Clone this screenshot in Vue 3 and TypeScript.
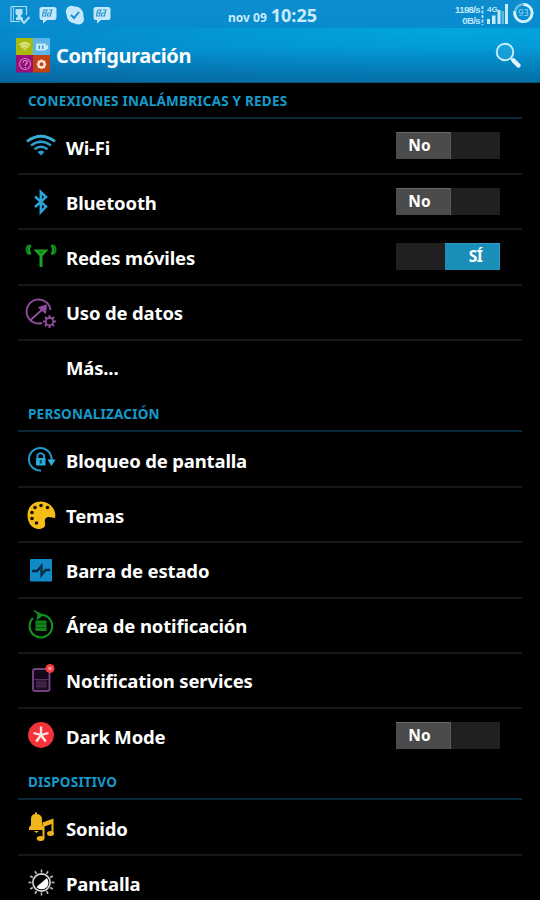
<script setup lang="ts">
interface Item { icon: string; label: string; on?: boolean }
interface Group { title: string; items: Item[] }

const groups: Group[] = [
  {
    title: 'CONEXIONES INALÁMBRICAS Y REDES',
    items: [
      { icon: 'wifi', label: 'Wi-Fi', on: false },
      { icon: 'bluetooth', label: 'Bluetooth', on: false },
      { icon: 'antenna', label: 'Redes móviles', on: true },
      { icon: 'data', label: 'Uso de datos' },
      { icon: '', label: 'Más...' },
    ],
  },
  {
    title: 'PERSONALIZACIÓN',
    items: [
      { icon: 'lock', label: 'Bloqueo de pantalla' },
      { icon: 'palette', label: 'Temas' },
      { icon: 'pulse', label: 'Barra de estado' },
      { icon: 'area', label: 'Área de notificación' },
      { icon: 'phone', label: 'Notification services' },
      { icon: 'star', label: 'Dark Mode', on: false },
    ],
  },
  {
    title: 'DISPOSITIVO',
    items: [
      { icon: 'sound', label: 'Sonido' },
      { icon: 'display', label: 'Pantalla' },
    ],
  },
]
const rays = [0, 30, 60, 90, 120, 150, 180, 210, 240, 270, 300, 330]
const teeth = [0, 45, 90, 135, 180, 225, 270, 315]
</script>

<template>
  <div class="screen">
    <div class="top">
      <div class="status">
        <svg class="notifs" width="115" height="28" viewBox="0 0 115 28">
          <g fill="none" stroke="#a9dcf6" stroke-width="1.2">
            <path d="M11 6.500H26.500V15M11 6.500V21.500H20" />
            <path d="M13.500 7V21" stroke-width=".8" />
            <path d="M21 19.500l3 3.500 5.500-6" stroke-width="2" />
          </g>
          <path d="M15.500 9h7v5l-2 2 2.500 2v2h-7v-2l2-2-2.500-2z" fill="#b5e2f8" />
          <g fill="#c3e8fb">
            <path d="M42 7h12q2.500 0 2.500 2.500v8q0 2.500-2.500 2.500h-7l-4 3.500V20h-1q-2.500 0-2.500-2.500v-8Q39.500 7 42 7z" />
            <path d="M96 7h12q2.500 0 2.500 2.500v8q0 2.500-2.500 2.500h-7l-4 3.500V20h-1q-2.500 0-2.500-2.500v-8Q93.500 7 96 7z" />
            <circle cx="75" cy="15" r="8.400" /><circle cx="71.500" cy="11.500" r="5.700" /><circle cx="78.500" cy="19" r="5.500" />
          </g>
          <path d="M71 15l3 3 5-6" fill="none" stroke="#168bc8" stroke-width="1.900" />
          <g fill="none" stroke="#2694cb" stroke-width="1.100">
            <path d="M44 10h3l-1 3h-3zM49 10h3l-1 3M43 13l-.6 3h3l.7-3M48 13h3l-.6 3h-3z" />
            <path d="M98 10h3l-1 3h-3zM103 10h3l-1 3M97 13l-.6 3h3l.7-3M102 13h3l-.6 3h-3z" />
          </g>
        </svg>
        <div class="clock"><span class="date">nov 09</span><span class="time">10:25</span></div>
        <div class="meters">
          <div class="speed"><span>1198/s</span><span>0B/s</span></div>
          <svg width="60" height="28" viewBox="0 0 60 28">
            <path d="M2.500 6v19" stroke="#b2e1f6" stroke-width="1.800" stroke-dasharray="3 1.500" />
            <path d="M7 19h3v5H7zM12 15.500h3.500v8.500H12zM17.500 10h3v14h-3zM25 4h3v20h-3z" fill="#c3ebfa" />
            <path d="M21.500 11h2.500v13h-2.500z" fill="#5fb8df" />
            <text x="7" y="12" class="net">4G</text>
            <circle cx="43.500" cy="13" r="8.700" fill="none" stroke="#67bce3" stroke-width="2.600" />
            <path d="M43.500 4.300a8.700 8.700 0 1 1-8.700 7" fill="none" stroke="#d4f1fe" stroke-width="2.800" />
            <text x="43.500" y="16.300" class="batt">93</text>
          </svg>
        </div>
      </div>
      <header class="bar">
        <svg class="logo" width="35" height="35" viewBox="0 0 35 35">
          <path d="M0 0h17v17H0z" fill="#a7ba0d" /><path d="M17 0h17v17H17z" fill="#5bb5e8" />
          <path d="M0 17h17v17.500H0z" fill="#980e7b" /><path d="M17 17h17v17.500H17z" fill="#c24111" />
          <path d="M3.500 6.500q5.300-4 10.600 0L8.800 13z" fill="#c8d55c" />
          <path d="M3.500 7q5.300-5 10.600 0M5.200 9.500q3.600-3.200 7.200 0" fill="none" stroke="#dce68e" stroke-width="1.300" />
          <path d="M20 5.500h10v7H20zM30 7.500h2v3.500h-2z" fill="#c7eafb" /><path d="M22.500 7.500h1.500v3.500h-1.500zM26 7.500h1.500v3.500H26z" fill="#3e98cc" />
          <circle cx="9" cy="26" r="5.500" fill="none" stroke="#cb80b8" stroke-width="1.200" />
          <path d="M7 24.500q.2-2 2.200-2 2 0 2 1.700 0 1.200-1.800 2.200v1.400M9.400 29v1" fill="none" stroke="#dc99cb" stroke-width="1.200" />
          <g stroke="#ffe3d4" stroke-width="2"><path v-for="a in teeth" :key="a" d="M25.500 21.500v2" :transform="`rotate(${a} 25.500 26.300)`" /></g>
          <circle cx="25.500" cy="26.300" r="3" fill="none" stroke="#ffe9dd" stroke-width="2" />
        </svg>
        <h1>Configuración</h1>
        <svg class="search" width="30" height="30" viewBox="0 0 30 30">
          <circle cx="11" cy="11" r="8.300" fill="#38b1e0" fill-opacity=".4" stroke="#c9edfb" stroke-width="1.900" />
          <path d="M16.800 17l2.500 2.500" stroke="#c9edfb" stroke-width="2" />
          <path d="M19.500 19.500l5 5" stroke="#e0f6ff" stroke-width="4.500" stroke-linecap="round" />
        </svg>
      </header>
    </div>
    <main>
      <section v-for="g in groups" :key="g.title">
        <h2><span>{{ g.title }}</span></h2>
        <div v-for="it in g.items" :key="it.label" class="row">
          <svg class="icon" width="34" height="34" viewBox="0 0 34 34">
            <g v-if="it.icon === 'wifi'" fill="none" stroke="#2b9fd0" stroke-width="2.300">
              <path d="M3 12.500q14-10.500 28 0" stroke="#3bacd6" stroke-width="2.700" /><path d="M7 16.500q10-7.500 20 0" /><path d="M10.500 20.200q6.500-4.800 13 0" />
              <path d="M13.500 23q3.500-2.400 7 0L17 26.500z" fill="#2b9fd0" stroke="none" />
            </g>
            <path v-else-if="it.icon === 'bluetooth'" d="M11 11.500l11 10-5.200 5.500V7l5.200 5-11 10" fill="none" stroke="#2ba4d6" stroke-width="2.500" />
            <g v-else-if="it.icon === 'antenna'" fill="none" stroke="#14a51b" stroke-width="2.200">
              <path d="M9.500 9.500h15l-6 6.500v11h-3V16z" fill="#18a51f" stroke="none" />
              <path d="M14.500 11.500h5l-2.500 1.800z" fill="#075b0b" stroke="none" />
              <path d="M4.500 5q-4 4.500 0 9.500M29.500 5q4 4.500 0 9.500" stroke="#118718" stroke-width="2" />
              <path d="M6.500 5q-3.200 4.700 0 9.500M27.500 5q3.200 4.700 0 9.500" />
            </g>
            <g v-else-if="it.icon === 'data'" fill="none" stroke="#8e4d9d" stroke-width="1.900">
              <path d="M18 28A12 12 0 1 1 26.500 15M6 25.500L20 13" />
              <path d="M14.500 12.500l8-2.500-1 8.500z" fill="#8e4d9d" stroke-width="1" />
              <circle cx="25.500" cy="26.500" r="3.800" />
              <path v-for="a in teeth" :key="a" d="M25.500 20v3" :transform="`rotate(${a} 25.500 26.500)`" />
            </g>
            <g v-else-if="it.icon === 'lock'" fill="none" stroke="#2495c6" stroke-width="2">
              <path d="M17 28.500A11.300 11.300 0 1 1 27.500 18" />
              <path d="M23.500 17.500h8L27.500 24z" fill="#31b0dc" stroke="none" />
              <path d="M12 16h9.500v7.500H12z" fill="#2da8d8" stroke="none" /><path d="M13.500 16.500v-3.500q3-3.500 6.500 0v3.500" /><path d="M16.800 18v3.500" stroke="#07445f" />
            </g>
            <g v-else-if="it.icon === 'palette'">
              <path d="M17 3.500C9 3.500 3.500 9 3.500 17.500c0 8 5.500 14 12 13.500 6-.5 6-4 5.500-6.500-.8-3.500 1-5.300 4-5.500l6 1c2-8-5-16.500-14-16.500z" fill="#f3bc17" />
              <g fill="#140f00"><circle cx="11" cy="9.500" r="1.800" /><circle cx="17" cy="7.500" r="1.800" /><circle cx="23.500" cy="9.500" r="1.800" /><circle cx="8" cy="14.500" r="1.800" /><circle cx="8" cy="20.500" r="1.800" /><circle cx="12.500" cy="25" r="1.800" /></g>
            </g>
            <g v-else-if="it.icon === 'pulse'">
              <rect x="6" y="6" width="22" height="22.500" rx="1" fill="#118bc7" />
              <path d="M8 18h5l4.500-5v9l4-5H26" fill="none" stroke="#042b43" stroke-width="2.300" />
            </g>
            <g v-else-if="it.icon === 'area'" fill="none" stroke="#14921d" stroke-width="2.100">
              <path d="M19 7A11.300 11.300 0 1 1 9 10" /><path d="M10 2.500l9 4.500-6 4.500 1-5z" fill="#14921d" stroke-width="1" />
              <path d="M11.500 12.500h11v10.500h-11z" fill="#11861a" stroke="none" /><path d="M11.500 16h11M11.500 19.500h11" stroke="#055209" stroke-width=".9" />
            </g>
            <g v-else-if="it.icon === 'phone'">
              <rect x="9" y="6" width="16.500" height="22" rx="2" fill="#16081a" stroke="#70437c" stroke-width="1.900" />
              <path d="M12 17h10.500v8.500H12z" fill="#321b39" /><path d="M10 16.500h15M12 20h10.500M12 23h10.500" stroke="#56305f" stroke-width="1" />
              <circle cx="26" cy="5.500" r="4.500" fill="#f33a3e" /><circle cx="26" cy="5.500" r="1.800" fill="#ff9c9c" />
            </g>
            <g v-else-if="it.icon === 'star'">
              <circle cx="17" cy="16" r="12.900" fill="#f5333b" />
              <path d="M17 16V7.500M17 16l-7.500-2M17 16l7.500-2M17 16l-4.700 6.500M17 16l4.700 6.500" stroke="#ffe8e8" stroke-width="2.300" />
            </g>
            <g v-else-if="it.icon === 'sound'" fill="#efb51b">
              <path d="M5 17.500L7 15V9q0-4.500 4-5V2.500h2V4q5 .5 5 5.500V15l1.500 2.500V20H5zM10 21h5l-2.500 2z" />
              <path d="M18.500 12.500l11-4v14h-2v-8.500l-7 2.500v12h-2z" />
              <ellipse cx="16.500" cy="28.500" rx="3.800" ry="2.500" /><ellipse cx="26.500" cy="23.500" rx="3.500" ry="2.500" />
            </g>
            <g v-else-if="it.icon === 'display'">
              <circle cx="17.500" cy="16.500" r="8.600" fill="none" stroke="#dedede" stroke-width="1.600" />
              <path d="M22.800 12A6.500 6.500 0 1 1 12.500 21z" fill="#fff" />
              <path v-for="a in rays" :key="a" d="M17.500 3.500v3" :transform="`rotate(${a} 17.500 16.500)`" stroke="#bcbcbc" stroke-width="1.600" />
            </g>
          </svg>
          <span class="label">{{ it.label }}</span>
          <span v-if="it.on !== undefined" class="switch" :class="{ on: it.on }"><b>{{ it.on ? 'SÍ' : 'No' }}</b></span>
        </div>
      </section>
    </main>
  </div>
</template>

<style>
body { background: #000; overflow: hidden; }
</style>

<style scoped>
.screen { width: 540px; height: 900px; overflow: hidden; background: #000; font-family: "Noto Sans", sans-serif; color: #fff; }
.top { height: 83px; background: #0690cf; }
.status { height: 28px; display: flex; align-items: center; justify-content: space-between; background: linear-gradient(#0d8dce, #078ccf); }
.notifs { flex: none; }
.clock { display: flex; align-items: baseline; gap: 4px; margin-left: 113px; margin-top: 2px; color: #c9ecfc; font-weight: 700; }
.date { font-size: 12px; }
.time { font-size: 18px; line-height: 24px; }
.meters { display: flex; align-items: center; margin-left: auto; }
.speed { display: flex; flex-direction: column; align-items: flex-end; font-family: "Liberation Sans", sans-serif; font-size: 9.500px; line-height: 11px; letter-spacing: -.6px; font-weight: 700; color: #bfe9fa; margin-top: 2px; }
.net { font-family: "Liberation Sans", sans-serif; font-size: 8px; font-weight: 700; fill: #bde8fa; }
.batt { font-size: 9px; fill: #98d9f7; text-anchor: middle; }
.bar { height: 55px; box-sizing: border-box; display: flex; align-items: center; padding: 0 16px 0 16px; border-bottom: 1px solid #075579; background: linear-gradient(rgba(0, 60, 90, 0) 35%, rgba(0, 60, 90, .32)), radial-gradient(ellipse at 85% 0, rgba(0, 172, 226, .9), rgba(0, 160, 220, 0) 100%), #087bc4; }
h1 { margin: 2px 0 0 5px; flex: 1; font-size: 20px; line-height: 28px; letter-spacing: -.38px; }
.logo, .search { flex: none; }
.search { margin-top: 2px; }
h2 { height: 36px; margin: 0 18px; padding: 0 10px; box-sizing: border-box; border-bottom: 2px solid #082a38; color: #169aca; font-size: 13.500px; line-height: 37px; letter-spacing: .22px; font-weight: 700; }
.row { height: 55.250px; margin: 0 18px; padding: 0 22px 0 6px; box-sizing: border-box; border-bottom: 2px solid #171717; display: flex; align-items: center; }
h2 + .row { height: 56px; }
.row:last-child { border-bottom-color: transparent; }
.icon { flex: none; }
.label { flex: 1; margin-left: 8px; padding-top: 2px; font-size: 18.500px; line-height: 24px; letter-spacing: -.16px; font-weight: 700; white-space: nowrap; }
h2 + .row .label { padding-top: 4px; }
.switch { width: 104px; height: 27px; margin-top: -1px; background: #202020; display: flex; }
.switch b { width: 55px; box-sizing: border-box; padding-right: 7px; background: #4b4b4b; border-top: 1px solid #686868; border-right: 1px solid #5b5b5b; text-align: center; font-size: 15.500px; line-height: 25px; }
.switch.on { justify-content: flex-end; }
.switch.on b { padding: 0 0 0 7px; background: #198fba; border-color: #2b9dc5; letter-spacing: -.5px; }
</style>
